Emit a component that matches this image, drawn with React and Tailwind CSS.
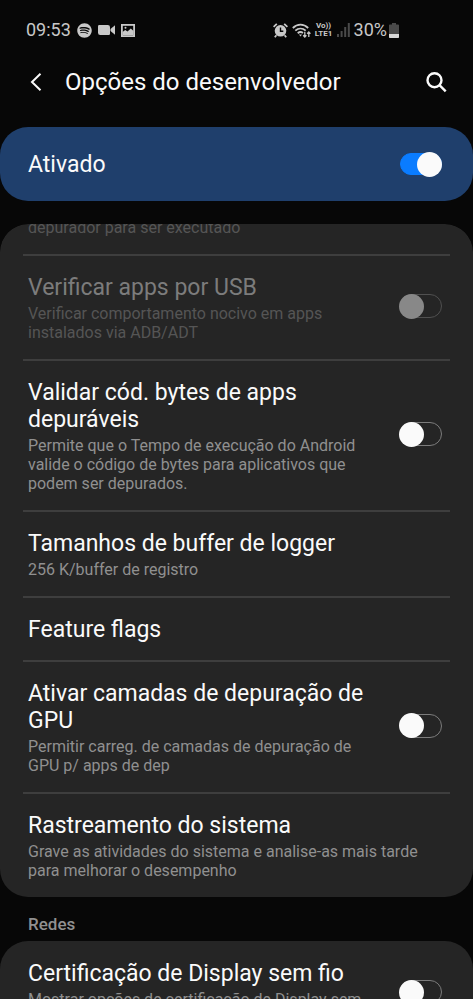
import { useState } from "react";
import { FaSpotify } from "react-icons/fa";

const devOptions = [
    {
        id: "usb",
        title: "Verificar apps por USB",
        summary: "Verificar comportamento nocivo em apps instalados via ADB/ADT",
        toggle: true,
        disabled: true,
    },
    {
        id: "bytecode",
        title: "Validar cód. bytes de apps depuráveis",
        summary: "Permite que o Tempo de execução do Android valide o código de bytes para aplicativos que podem ser depurados.",
        toggle: true,
    },
    { id: "logger", title: "Tamanhos de buffer de logger", summary: "256 K/buffer de registro" },
    { id: "flags", title: "Feature flags" },
    {
        id: "gpu",
        title: "Ativar camadas de depuração de GPU",
        summary: "Permitir carreg. de camadas de depuração de GPU p/ apps de dep",
        toggle: true,
    },
    {
        id: "tracing",
        title: "Rastreamento do sistema",
        summary: "Grave as atividades do sistema e analise-as mais tarde para melhorar o desempenho",
    },
];

const networkOptions = [
    {
        id: "display",
        title: "Certificação de Display sem fio",
        summary: "Mostrar opções de certificação de Display sem fio",
        toggle: true,
    },
];

function Switch({ id, checked, disabled, onChange }) {
    return (
        <input id={id} type="checkbox" role="switch" checked={checked} disabled={disabled} onChange={onChange}
            className="appearance-none shrink-0 flex items-center w-[42px] h-6 rounded-full border border-[#7c7c7c] before:content-[''] before:block before:shrink-0 before:size-[25px] before:-ml-[2px] before:rounded-full before:bg-[#fafafa] checked:h-[22px] checked:border-[#0a7cff] checked:bg-[#0a7cff] checked:before:ml-4 disabled:border-[#505050] disabled:before:bg-[#888888]" />
    );
}

function OptionRow({ option, checked, onToggle }) {
    const { id, title, summary, toggle, disabled } = option;
    const body = (
        <>
            <span className={`block text-[23px] leading-[27px] ${disabled ? "text-[#7c7c7c]" : "text-[#fafafa]"}`}>{title}</span>
            {summary && (
                <span className={`block mt-[3px] text-base leading-[19px] ${disabled ? "text-[#555555]" : "text-[#909090]"}`}>{summary}</span>
            )}
        </>
    );

    if (!toggle) {
        return <button type="button" className="block w-full pt-[18px] pb-[17px] px-[5px] text-left">{body}</button>;
    }
    return (
        <div className="flex items-center justify-between gap-6 pt-[14px] pb-[17px] pl-[5px] pr-2">
            <label htmlFor={id} className="flex-1 pt-1">{body}</label>
            <Switch id={id} checked={checked} disabled={disabled} onChange={() => onToggle(id)} />
        </div>
    );
}

function StatusBar() {
    return (
        <div className="flex items-center justify-between h-[30px] pl-[26px] pr-[74px] text-[#c8c8c8]">
            <div className="flex items-center gap-[6px]">
                <span className="text-lg leading-5">09:53</span>
                <FaSpotify className="size-[15px]" />
                <svg className="w-[17px] h-[10px]" viewBox="0 0 17 10" fill="currentColor">
                    <path d="M1.2 0h8.6Q12 0 12 2.2V8.800Q12 10 10.800 10H2.200Q0 10 0 7.800V1.200Q0 0 1.200 0z" />
                    <path d="M12.5 4 17 .3v9.400L12.500 6z" />
                </svg>
                <svg className="w-[14px] h-[13px]" viewBox="0 0 14 13" fill="none">
                    <rect x=".9" y=".9" width="12.2" height="11.2" stroke="currentColor" strokeWidth="1.8" />
                    <path d="M1.500 11V8l2.700-2 2.300 1.600 3.300-3 2.700 2.400v4z" fill="currentColor" />
                    <circle cx="4.5" cy="3.8" r="1" fill="currentColor" />
                </svg>
            </div>
            <div className="flex items-center gap-1">
                {/* Alarm */}
                <svg className="size-[15px]" viewBox="0 0 15 15" fill="none" stroke="currentColor">
                    <circle cx="7.5" cy="7.8" r="5.8" fill="currentColor" stroke="none" />
                    <path d="M7.5 4.5v3.700h2.800" stroke="#070707" strokeWidth="1.4" />
                    <path d="M.6 3.800 3.800.9M14.400 3.800 11.200.9M3.400 12.200 1.800 14.200M11.600 12.200l1.600 2" strokeWidth="1.8" />
                </svg>
                {/* Wi-Fi with traffic arrows */}
                <svg className="w-[19px] h-[15px]" viewBox="0 0 19 15" fill="none" stroke="currentColor" strokeWidth="1.8">
                    <path d="M.8 5c4.6-4.4 10.8-4.4 15.4 0M3.3 7.7c3.1-2.9 7.3-2.9 10.4 0M5.7 10.2c1.8-1.5 3.6-1.5 5.3-.3" />
                    <path d="M7 11.5h3L8.5 13.4z" fill="currentColor" stroke="none" />
                    <path d="M12.8 8.8v5M11.2 12.2l1.6 1.8 1.6-1.8M16.8 14V9M15.2 10.7l1.6-1.8 1.6 1.8" strokeWidth="1.3" />
                </svg>
                <span className="flex flex-col items-center w-[18px] text-[8px] leading-[8px] font-bold">
                    <span>Vo))</span>
                    <span>LTE1</span>
                </span>
                <svg className="w-[13px] h-[14px] text-[#4a4a4a]" viewBox="0 0 13 14" fill="currentColor">
                    <rect y="11" width="2" height="3" />
                    <rect x="3.6" y="8" width="2" height="6" />
                    <rect x="7.2" y="4" width="2" height="10" />
                    <rect x="10.8" width="2" height="14" />
                </svg>
                <span className="text-lg leading-5">30%</span>
                <svg className="w-[10px] h-[15px] -ml-[2px]" viewBox="0 0 10 15">
                    <path d="M3 0h4v1.5h2.2q.8 0 .8.8V11H0V2.3q0-.8.8-.8H3z" fill="#4a4a4a" />
                    <path d="M0 11h10v3.2q0 .8-.8.8H.8q-.8 0-.8-.8z" fill="#d8d8d8" />
                </svg>
            </div>
        </div>
    );
}

export default function App() {
    const [enabled, setEnabled] = useState(true);
    const [values, setValues] = useState({});

    const handleToggle = (id) => setValues(prev => ({ ...prev, [id]: !prev[id] }));

    const renderRows = (options) => options.map(o => (
        <OptionRow key={o.id} option={o} checked={!!values[o.id]} onToggle={handleToggle} />
    ));

    return (
        <div className="flex flex-col h-screen overflow-hidden bg-[#070707] pt-[15px] font-[Roboto,sans-serif]">
            <StatusBar />

            {/* Header */}
            <header className="flex items-center h-[74px] pl-[30px] pr-[26px] text-[#fafafa]">
                <button type="button" aria-label="Voltar" className="mr-[23px]">
                    <svg className="w-3 h-[18px]" viewBox="0 0 12 18" fill="none" stroke="currentColor" strokeWidth="2"><path d="M10.5.8 2 9l8.5 8.2" /></svg>
                </button>
                <h1 className="flex-1 text-2xl">Opções do desenvolvedor</h1>
                <button type="button" aria-label="Pesquisar">
                    <svg className="size-[21px]" viewBox="0 0 21 21" fill="none" stroke="currentColor" strokeWidth="2.4"><circle cx="8.5" cy="8.2" r="7" /><path d="m13.500 13.200 6.200 6.200" /></svg>
                </button>
            </header>

            {/* Master switch */}
            <div className="flex items-center justify-between shrink-0 h-[74px] mt-2 pl-7 pr-[31px] rounded-[28px] bg-[#1f3f6c]">
                <label htmlFor="master" className="flex-1 text-[23px] leading-[27px] text-[#fafafa]">Ativado</label>
                <Switch id="master" checked={enabled} onChange={() => setEnabled(!enabled)} />
            </div>

            <main className="flex-1 min-h-0 mt-[23px] overflow-y-auto rounded-t-[28px] [scrollbar-width:none]">
                <section className="overflow-hidden px-[23px] rounded-[28px] bg-[#252525] divide-y-2 divide-[#3e3e3e]">
                    <p className="-mt-[6px] pb-[17px] px-[5px] text-base leading-[19px] text-[#555555]">depurador para ser executado</p>
                    {renderRows(devOptions)}
                </section>
                <h2 className="pt-[18px] pb-[7px] px-7 text-[17px] leading-[19px] font-medium text-[#909090]">Redes</h2>
                <section className="px-[23px] pt-px rounded-[28px] bg-[#252525]">
                    {renderRows(networkOptions)}
                </section>
            </main>
        </div>
    );
}
